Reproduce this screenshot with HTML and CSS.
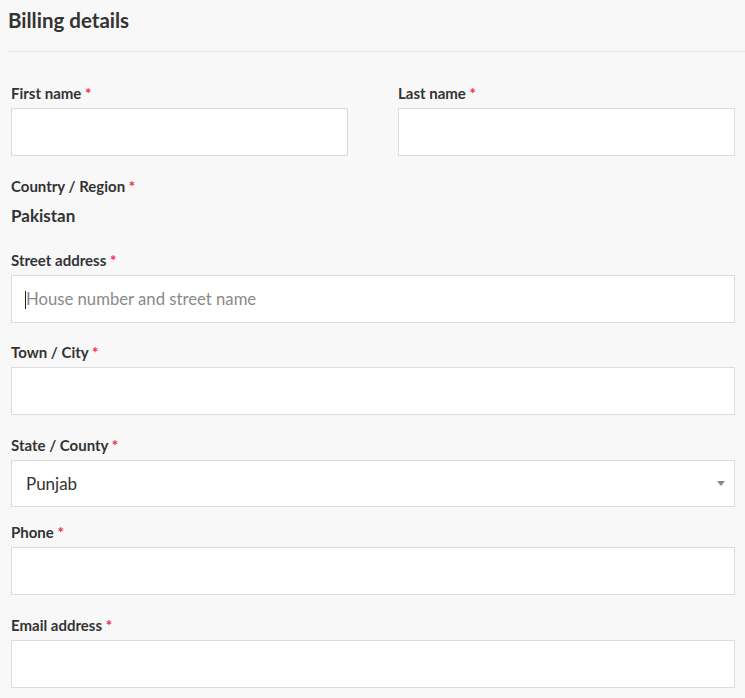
FILE: index.html
```html
<!DOCTYPE html>
<html lang="en">
<head>
<meta charset="utf-8">
<title>Billing details</title>
<link rel="stylesheet" href="styles.css">
</head>
<body>
<div class="page">
  <h3 class="title">Billing details</h3>
  <div class="fields">
    <div class="row-2">
      <div class="field">
        <label class="lbl">First name <abbr class="req">*</abbr></label>
        <input class="inp" type="text">
      </div>
      <div class="field">
        <label class="lbl">Last name <abbr class="req">*</abbr></label>
        <input class="inp" type="text">
      </div>
    </div>
    <div class="field">
      <label class="lbl">Country / Region <abbr class="req">*</abbr></label>
      <strong class="country">Pakistan</strong>
    </div>
    <div class="field field-street">
      <label class="lbl">Street address <abbr class="req">*</abbr></label>
      <div class="caret-wrap">
        <input class="inp inp-street" type="text" placeholder="House number and street name">
      </div>
    </div>
    <div class="field">
      <label class="lbl">Town / City <abbr class="req">*</abbr></label>
      <input class="inp" type="text">
    </div>
    <div class="field field-select">
      <label class="lbl">State / County <abbr class="req">*</abbr></label>
      <div class="select">
        <span class="select-value">Punjab</span>
        <span class="select-arrow"></span>
      </div>
    </div>
    <div class="field">
      <label class="lbl">Phone <abbr class="req">*</abbr></label>
      <input class="inp" type="tel">
    </div>
    <div class="field">
      <label class="lbl">Email address <abbr class="req">*</abbr></label>
      <input class="inp" type="email">
    </div>
  </div>
</div>
</body>
</html>
```
FILE: styles.css
```css
* { box-sizing: border-box; }
html, body {
  margin: 0;
  background: #f8f8f8;
}
body {
  font-family: Lato, "Open Sans", sans-serif;
  color: #333;
}
.page {
  padding-left: 8px;
}
.title {
  margin: 0;
  padding: 8px 0 19px;
  font-size: 20.5px;
  line-height: 24px;
  font-weight: 700;
  color: #333;
  border-bottom: 1px solid #e6e6e6;
}
.fields {
  margin: 31px 0 0 3px;
  width: 724px;
}
.row-2 {
  display: grid;
  grid-template-columns: 337px 337px;
  column-gap: 50px;
}
.field {
  margin-bottom: 20px;
}
.field-street {
  margin-bottom: 19px;
}
.field-select {
  margin-bottom: 15px;
}
.lbl {
  display: block;
  font-size: 15px;
  line-height: 20px;
  font-weight: 700;
  color: #333;
  margin-bottom: 5px;
}
.req {
  color: #ec2a4a;
  text-decoration: none;
  border: 0;
}
.inp {
  display: block;
  width: 100%;
  height: 48px;
  margin: 0;
  padding: 0 14px;
  background: #fff;
  border: 1px solid #dcdcdc;
  border-radius: 0;
  font-family: Lato, sans-serif;
  font-size: 17px;
  color: #333;
  outline: none;
}
.inp-street {
  font-size: 16.7px;
}
.inp::placeholder {
  color: #8a8a8a;
  opacity: 1;
}
.country {
  display: block;
  font-size: 17px;
  line-height: 24px;
  font-weight: 700;
  margin-top: 8px;
  padding-bottom: 1.5px;
}
.caret-wrap {
  position: relative;
}
.caret-wrap::after {
  content: "";
  position: absolute;
  left: 14px;
  top: 16px;
  width: 1px;
  height: 18px;
  background: #222;
}
.select {
  position: relative;
  display: flex;
  align-items: center;
  height: 47px;
  padding: 0 6px 0 14px;
  background: #fff;
  border: 1px solid #dcdcdc;
  font-size: 17px;
  color: #333;
}
.select-value {
  flex: 1;
}
.select-arrow {
  width: 0;
  height: 0;
  margin-right: 3px;
  margin-top: 1px;
  border-top: 5px solid #888;
  border-left: 4px solid transparent;
  border-right: 4px solid transparent;
}
```
